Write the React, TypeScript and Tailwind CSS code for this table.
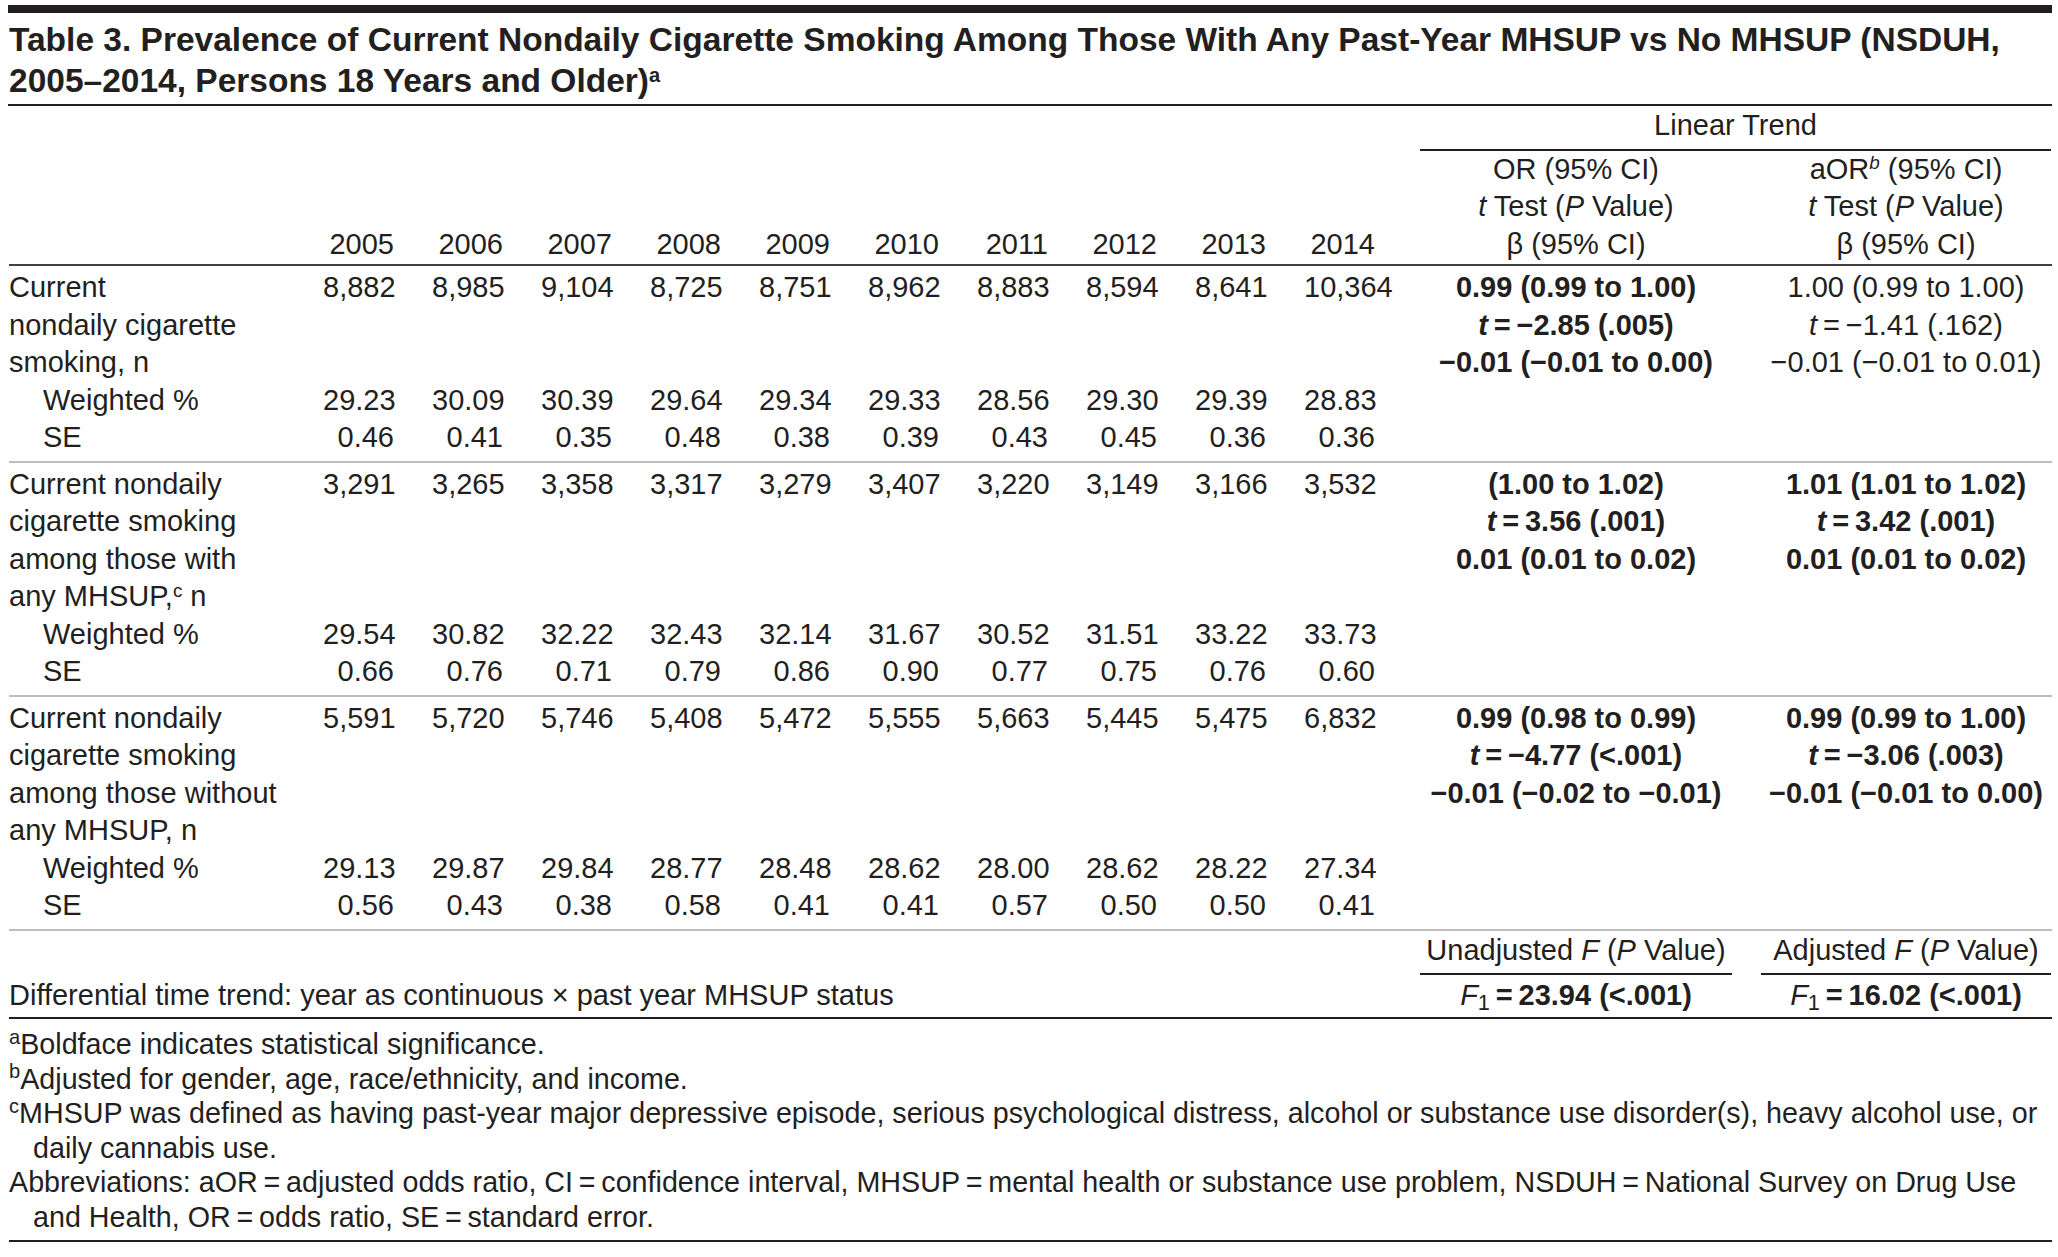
import clsx from "clsx";

type Stat = { est: string; t: string; beta: string; bold: boolean };
type Group = {
  label: React.ReactNode[];
  n: string[];
  w: string[];
  se: string[];
  or: Stat;
  aor: Stat;
};

const years = ["2005", "2006", "2007", "2008", "2009", "2010", "2011", "2012", "2013", "2014"];
const eq = "\u2009=\u2009";

const groups: Group[] = [
  {
    label: ["Current", "nondaily cigarette", "smoking, n"],
    n: ["8,882", "8,985", "9,104", "8,725", "8,751", "8,962", "8,883", "8,594", "8,641", "10,364"],
    w: ["29.23", "30.09", "30.39", "29.64", "29.34", "29.33", "28.56", "29.30", "29.39", "28.83"],
    se: ["0.46", "0.41", "0.35", "0.48", "0.38", "0.39", "0.43", "0.45", "0.36", "0.36"],
    or: { est: "0.99 (0.99 to 1.00)", t: "\u22122.85 (.005)", beta: "\u22120.01 (\u22120.01 to 0.00)", bold: true },
    aor: { est: "1.00 (0.99 to 1.00)", t: "\u22121.41 (.162)", beta: "\u22120.01 (\u22120.01 to 0.01)", bold: false },
  },
  {
    label: [
      "Current nondaily",
      "cigarette smoking",
      "among those with",
      <>
        any MHSUP,<sup className="text-[0.65em]">c</sup> n
      </>,
    ],
    n: ["3,291", "3,265", "3,358", "3,317", "3,279", "3,407", "3,220", "3,149", "3,166", "3,532"],
    w: ["29.54", "30.82", "32.22", "32.43", "32.14", "31.67", "30.52", "31.51", "33.22", "33.73"],
    se: ["0.66", "0.76", "0.71", "0.79", "0.86", "0.90", "0.77", "0.75", "0.76", "0.60"],
    or: { est: "(1.00 to 1.02)", t: "3.56 (.001)", beta: "0.01 (0.01 to 0.02)", bold: true },
    aor: { est: "1.01 (1.01 to 1.02)", t: "3.42 (.001)", beta: "0.01 (0.01 to 0.02)", bold: true },
  },
  {
    label: ["Current nondaily", "cigarette smoking", "among those without", "any MHSUP, n"],
    n: ["5,591", "5,720", "5,746", "5,408", "5,472", "5,555", "5,663", "5,445", "5,475", "6,832"],
    w: ["29.13", "29.87", "29.84", "28.77", "28.48", "28.62", "28.00", "28.62", "28.22", "27.34"],
    se: ["0.56", "0.43", "0.38", "0.58", "0.41", "0.41", "0.57", "0.50", "0.50", "0.41"],
    or: { est: "0.99 (0.98 to 0.99)", t: "\u22124.77 (<.001)", beta: "\u22120.01 (\u22120.02 to \u22120.01)", bold: true },
    aor: { est: "0.99 (0.99 to 1.00)", t: "\u22123.06 (.003)", beta: "\u22120.01 (\u22120.01 to 0.00)", bold: true },
  },
];

const grid = "grid grid-cols-[314px_repeat(10,109px)_334px_304px]";
const num = "text-right pr-[38px] whitespace-nowrap";
const orPad = "pl-[7px] pr-[15px]";
const aorPad = "pl-[14px]";

function Trend({ s, pad }: { s: Stat; pad: string }) {
  return (
    <div className={clsx("text-center whitespace-nowrap", pad, s.bold && "font-bold")}>
      <div>{s.est}</div>
      <div>
        <i>t</i>
        {eq}
        {s.t}
      </div>
      <div>{s.beta}</div>
    </div>
  );
}

function GroupRows({ g }: { g: Group }) {
  return (
    <div className={clsx(grid, "pt-[3px] pb-[4px] border-b-2 border-[#bcbec0]")}>
      <div className="whitespace-nowrap">
        {g.label.map((l, i) => (
          <div key={i}>{l}</div>
        ))}
      </div>
      {g.n.map((v, i) => (
        <div key={i} className={num}>
          {v}
        </div>
      ))}
      <Trend s={g.or} pad={orPad} />
      <Trend s={g.aor} pad={aorPad} />

      <div className="col-start-1 pl-[34px]">Weighted %</div>
      {g.w.map((v, i) => (
        <div key={i} className={num}>
          {v}
        </div>
      ))}
      <div className="col-start-1 pl-[34px]">SE</div>
      {g.se.map((v, i) => (
        <div key={i} className={num}>
          {v}
        </div>
      ))}
    </div>
  );
}

export default function App() {
  return (
    <div className="min-h-screen bg-white">
      <div className="w-[2058px] pl-[8px] pr-[6px] pt-[5px] text-[#231f20] font-['Liberation_Sans',Arial,sans-serif] text-[29px] leading-[37.5px]">
        <div className="h-[8px] bg-[#231f20]" />

        <h1 className="mt-[6px] pl-[1px] pb-[3px] border-b-2 border-[#231f20] text-[33.5px] leading-[41px] font-bold whitespace-nowrap">
          <div>
            Table 3. Prevalence of Current Nondaily Cigarette Smoking Among Those With Any Past-Year MHSUP vs No MHSUP (NSDUH,
          </div>
          <div>
            2005–2014, Persons 18 Years and Older)<sup className="text-[0.6em]">a</sup>
          </div>
        </h1>

        <div className="pl-[1px]">
          {/* header */}
          <div className={clsx(grid, "pt-[1px] pb-[1px] border-b-2 border-[#414042]")}>
            <div className="row-span-2" />
            {years.map((y) => (
              <div key={y} className={clsx(num, "row-span-2 self-end")}>
                {y}
              </div>
            ))}
            <div className="col-span-2 ml-[7px] pb-[4px] border-b-2 border-[#231f20] text-center">Linear Trend</div>
            <div className={clsx("text-center whitespace-nowrap", orPad)}>
              <div>OR (95% CI)</div>
              <div>
                <i>t</i> Test (<i>P</i> Value)
              </div>
              <div>β (95% CI)</div>
            </div>
            <div className={clsx("text-center whitespace-nowrap", aorPad)}>
              <div>
                aOR<sup className="text-[0.65em] italic">b</sup> (95% CI)
              </div>
              <div>
                <i>t</i> Test (<i>P</i> Value)
              </div>
              <div>β (95% CI)</div>
            </div>
          </div>

          {groups.map((g, i) => (
            <GroupRows key={i} g={g} />
          ))}

          {/* F test footer */}
          <div className={clsx(grid, "pt-[1.5px] pb-[3px] border-b-2 border-[#231f20]")}>
            <div className="col-span-11" />
            <div className={orPad}>
              <div className="text-center whitespace-nowrap pb-[3px] border-b-2 border-[#231f20]">
                Unadjusted <i>F</i> (<i>P</i> Value)
              </div>
            </div>
            <div className={aorPad}>
              <div className="text-center whitespace-nowrap pb-[3px] border-b-2 border-[#231f20]">
                Adjusted <i>F</i> (<i>P</i> Value)
              </div>
            </div>
            <div className="col-span-11 pt-[2px] whitespace-nowrap">
              Differential time trend: year as continuous × past year MHSUP status
            </div>
            <div className={clsx("pt-[2px] text-center whitespace-nowrap", orPad)}>
              <i>F</i>
              <sub>1</sub>
              <b>
                {eq}23.94 (&lt;.001)
              </b>
            </div>
            <div className={clsx("pt-[2px] text-center whitespace-nowrap", aorPad)}>
              <i>F</i>
              <sub>1</sub>
              <b>
                {eq}16.02 (&lt;.001)
              </b>
            </div>
          </div>

          {/* footnotes */}
          <div className="pt-[8px] pb-[6px] border-b-2 border-[#231f20] text-[28.7px] leading-[34.5px] whitespace-nowrap">
            <div>
              <sup className="text-[0.7em]">a</sup>Boldface indicates statistical significance.
            </div>
            <div>
              <sup className="text-[0.7em]">b</sup>Adjusted for gender, age, race/ethnicity, and income.
            </div>
            <div>
              <sup className="text-[0.7em]">c</sup>MHSUP was defined as having past-year major depressive episode, serious
              psychological distress, alcohol or substance use disorder(s), heavy alcohol use, or
            </div>
            <div className="pl-[24px]">daily cannabis use.</div>
            <div>
              Abbreviations: aOR{eq}adjusted odds ratio, CI{eq}confidence interval, MHSUP{eq}mental health or
              substance use problem, NSDUH{eq}National Survey on Drug Use
            </div>
            <div className="pl-[24px]">and Health, OR{eq}odds ratio, SE{eq}standard error.</div>
          </div>
        </div>
      </div>
    </div>
  );
}
